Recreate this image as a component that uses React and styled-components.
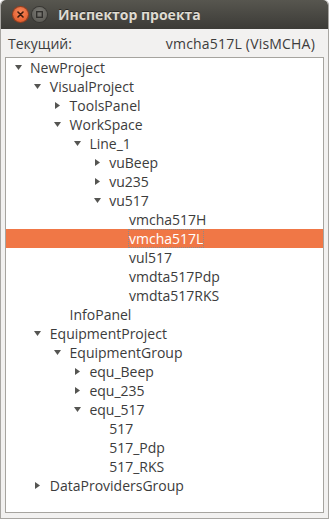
import React from 'react';
import styled, { createGlobalStyle } from 'styled-components';

/* global */

const Global = createGlobalStyle`
  html, body {
    margin: 0;
    padding: 0;
    background: #ffffff;
  }
  body {
    font-family: "Open Sans", "DejaVu Sans", sans-serif;
  }
`;

/* window */

const Window = styled.div`
  width: 329px;
  height: 519px;
  box-sizing: border-box;
  display: flex;
  flex-direction: column;
  background: #f2f1f0;
  border: 1px solid #a8a6a2;
  border-top: none;
  border-radius: 5px 5px 0 0;
  overflow: hidden;
`;

const TitleBar = styled.div`
  height: 29px;
  flex: none;
  display: flex;
  align-items: center;
  padding-left: 4px;
  background: linear-gradient(#57564f, #3c3b37);
  border-radius: 5px 5px 0 0;
`;

const WinButton = styled.div`
  width: 15px;
  height: 15px;
  border-radius: 50%;
  margin-left: ${p => p.$gap}px;
  display: flex;
  align-items: center;
  justify-content: center;
  background: ${p => p.$close
    ? 'radial-gradient(circle at 50% 35%, #f6895d, #e2511f)'
    : 'radial-gradient(circle at 50% 35%, #7b7a75, #56554f)'};
  box-shadow: 0 0 0 1px ${p => p.$close ? '#9d3e1c' : '#383733'};
`;

const Title = styled.div`
  margin-left: 11px;
  color: #dfdbd2;
  font-size: 14px;
  font-weight: bold;
  text-shadow: 0 -1px 0 #2a2926;
`;

/* body */

const Body = styled.div`
  flex: 1;
  display: flex;
  flex-direction: column;
  padding: 0 4px 4px 4px;
`;

const CurrentRow = styled.div`
  height: 28px;
  display: flex;
  align-items: center;
  justify-content: space-between;
  padding: 0 9px 0 3px;
  color: #3c3c3c;
  font-size: 14px;
`;

const Value = styled.span`
  letter-spacing: 0.2px;
`;

const TreeBox = styled.div`
  flex: 1;
  background: #ffffff;
  border: 1px solid #a6a49f;
  margin-bottom: 1px;
`;

const Row = styled.div`
  height: 19px;
  display: flex;
  align-items: center;
  padding-left: ${p => 6 + p.$depth * 19.8}px;
  background: ${p => p.$selected ? '#f07746' : 'transparent'};
  color: ${p => p.$selected ? '#ffffff' : '#3c3c3c'};
  font-size: 14px;
`;

const Expander = styled.span`
  width: 12px;
  height: 19px;
  margin-right: 6px;
  display: flex;
  align-items: center;
  justify-content: center;
  flex: none;
`;

const Label = styled.span`
  white-space: nowrap;
  line-height: 17px;
  outline: ${p => p.$focus ? '1px dotted #8a8a8a' : 'none'};
`;

const Arrow = ({ open }) => (
  open
    ? <svg width="7" height="5" viewBox="0 0 7 5"><path d="M0 0h7L3.5 5z" fill="#555552" /></svg>
    : <svg width="5" height="7" viewBox="0 0 5 7"><path d="M0 0v7l5-3.5z" fill="#555552" /></svg>
);

// depth, name, expander state ('open', 'closed' or null)
const rows = [
  [0, 'NewProject', 'open'],
  [1, 'VisualProject', 'open'],
  [2, 'ToolsPanel', 'closed'],
  [2, 'WorkSpace', 'open'],
  [3, 'Line_1', 'open'],
  [4, 'vuBeep', 'closed'],
  [4, 'vu235', 'closed'],
  [4, 'vu517', 'open'],
  [5, 'vmcha517H', null],
  [5, 'vmcha517L', null, true],
  [5, 'vul517', null],
  [5, 'vmdta517Pdp', null],
  [5, 'vmdta517RKS', null],
  [2, 'InfoPanel', null],
  [1, 'EquipmentProject', 'open'],
  [2, 'EquipmentGroup', 'open'],
  [3, 'equ_Beep', 'closed'],
  [3, 'equ_235', 'closed'],
  [3, 'equ_517', 'open'],
  [4, '517', null],
  [4, '517_Pdp', null],
  [4, '517_RKS', null],
  [1, 'DataProvidersGroup', 'closed'],
];

const App = () => {
  return (
    <>
      <Global />
      <Window>

        <TitleBar>
          <WinButton $close $gap={8}>
            <svg width="7" height="7" viewBox="0 0 7 7">
              <path d="M1 1l5 5M6 1L1 6" stroke="#3b1a0c" strokeWidth="1.6" strokeLinecap="round" />
            </svg>
          </WinButton>
          <WinButton $gap={4}>
            <svg width="7" height="7" viewBox="0 0 7 7">
              <rect x="0.7" y="0.7" width="5.6" height="5.6" fill="none" stroke="#2e2d2a" strokeWidth="1.3" />
            </svg>
          </WinButton>
          <Title>Инспектор проекта</Title>
        </TitleBar>

        <Body>
          <CurrentRow>
            <span>Текущий:</span>
            <Value>vmcha517L (VisMCHA)</Value>
          </CurrentRow>

          <TreeBox>
            {rows.map(([depth, name, state, selected]) => (
              <Row key={name} $depth={depth} $selected={selected}>
                <Expander>{state && <Arrow open={state === 'open'} />}</Expander>
                <Label $focus={selected}>{name}</Label>
              </Row>
            ))}
          </TreeBox>
        </Body>

      </Window>
    </>
  );
};

export default App;
